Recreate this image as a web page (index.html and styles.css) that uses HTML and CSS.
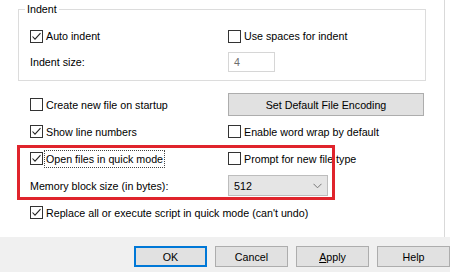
FILE: index.html
```html
<!DOCTYPE html>
<html>
<head>
<meta charset="utf-8">
<link rel="stylesheet" href="styles.css">
</head>
<body>
<div class="window">
  <div class="panel">
    <fieldset class="group">
      <legend class="group-title">Indent</legend>
      <div class="grid">
        <label class="check">
          <span class="box"><svg viewBox="0 0 13 13" width="13" height="13"><polyline points="2.5,6.5 5,9.2 10.5,3.2" fill="none" stroke="#222" stroke-width="1.1"/></svg></span>
          <span class="text">Auto indent</span>
        </label>
        <label class="check">
          <span class="box"></span>
          <span class="text">Use spaces for indent</span>
        </label>
        <span class="text">Indent size:</span>
        <div class="cell"><span class="input">4</span></div>
      </div>
    </fieldset>

    <div class="grid options">
      <label class="check">
        <span class="box"></span>
        <span class="text">Create new file on startup</span>
      </label>
      <div class="cell"><span class="btn wide">Set Default File Encoding</span></div>

      <label class="check">
        <span class="box"><svg viewBox="0 0 13 13" width="13" height="13"><polyline points="2.5,6.5 5,9.2 10.5,3.2" fill="none" stroke="#222" stroke-width="1.1"/></svg></span>
        <span class="text">Show line numbers</span>
      </label>
      <label class="check">
        <span class="box"></span>
        <span class="text">Enable word wrap by default</span>
      </label>

      <label class="check">
        <span class="box"><svg viewBox="0 0 13 13" width="13" height="13"><polyline points="2.5,6.5 5,9.2 10.5,3.2" fill="none" stroke="#222" stroke-width="1.1"/></svg></span>
        <span class="text focus">Open files in quick mode</span>
      </label>
      <label class="check">
        <span class="box"></span>
        <span class="text">Prompt for new file type</span>
      </label>

      <span class="text">Memory block size (in bytes):</span>
      <div class="cell">
        <span class="select"><span>512</span><svg viewBox="0 0 9 6" width="9" height="6"><polyline points="0.5,0.8 4.5,4.8 8.5,0.8" fill="none" stroke="#777" stroke-width="1"/></svg></span>
      </div>

      <label class="check span2">
        <span class="box"><svg viewBox="0 0 13 13" width="13" height="13"><polyline points="2.5,6.5 5,9.2 10.5,3.2" fill="none" stroke="#222" stroke-width="1.1"/></svg></span>
        <span class="text">Replace all or execute script in quick mode (can't undo)</span>
      </label>
    </div>

    <div class="highlight"></div>
  </div>

  <div class="footer">
    <span class="btn default">OK</span>
    <span class="btn">Cancel</span>
    <span class="btn"><u>A</u>pply</span>
    <span class="btn">Help</span>
  </div>
</div>
</body>
</html>
```

FILE: styles.css
```css
html, body {
  margin: 0;
  padding: 0;
  background: #fff;
}

body {
  font-family: "Liberation Sans", "DejaVu Sans", sans-serif;
  font-size: 10.7px;
  color: #000;
}

.window {
  width: 450px;
  height: 272px;
  display: flex;
  flex-direction: column;
  background: #fff;
}

.panel {
  position: relative;
  width: 445px;
  height: 237px;
  box-sizing: border-box;
  border-right: 1px solid #d9d9d9;
  padding-top: 3px;
}

.group {
  margin: 0 0 0 18px;
  width: 408px;
  box-sizing: border-box;
  border: 1px solid #dcdcdc;
  padding: 7px 0 5px 11px;
  min-width: 0;
}

.group-title {
  padding: 0 2px;
  margin-left: -5px;
  line-height: 13px;
}

.grid {
  display: grid;
  grid-template-columns: 198px 196px;
  grid-auto-rows: 26px;
  align-items: center;
}

.options {
  margin-top: 10px;
  padding-left: 30px;
  grid-auto-rows: 27px;
}

.span2 {
  grid-column: 1 / 3;
}

.cell {
  display: flex;
  align-items: center;
}

.check {
  display: flex;
  align-items: center;
  gap: 3px;
}

.box {
  width: 13px;
  height: 13px;
  box-sizing: border-box;
  border: 1px solid #333;
  background: #fff;
  display: flex;
  align-items: center;
  justify-content: center;
  overflow: hidden;
}

.box svg {
  display: block;
  flex: none;
}

.text {
  line-height: 14px;
  white-space: nowrap;
}

.focus {
  outline: 1px dotted #444;
  outline-offset: 1px;
}

.input {
  width: 47px;
  height: 20px;
  box-sizing: border-box;
  border: 1px solid #d6d6d6;
  color: #6d6d6d;
  padding-left: 5px;
  display: flex;
  align-items: center;
}

.btn {
  display: flex;
  align-items: center;
  justify-content: center;
  width: 73px;
  height: 21px;
  box-sizing: border-box;
  background: #e1e1e1;
  border: 1px solid #adadad;
  white-space: nowrap;
}

.btn.wide {
  width: 196px;
  height: 23px;
}

.btn.default {
  border-color: #0078d7;
  box-shadow: inset 0 0 0 1px #0078d7;
}

.select {
  width: 100px;
  height: 21px;
  box-sizing: border-box;
  background: #e5e5e5;
  border: 1px solid #bdbdbd;
  display: flex;
  align-items: center;
  justify-content: space-between;
  padding: 0 5px 0 5px;
}

.highlight {
  position: absolute;
  left: 17px;
  top: 145px;
  width: 318px;
  height: 55px;
  box-sizing: border-box;
  border: 3px solid #e0242c;
  pointer-events: none;
}

.footer {
  flex: 1;
  background: #f0f0f0;
  display: flex;
  gap: 8px;
  padding: 9px 0 0 134px;
  box-sizing: border-box;
}
```
